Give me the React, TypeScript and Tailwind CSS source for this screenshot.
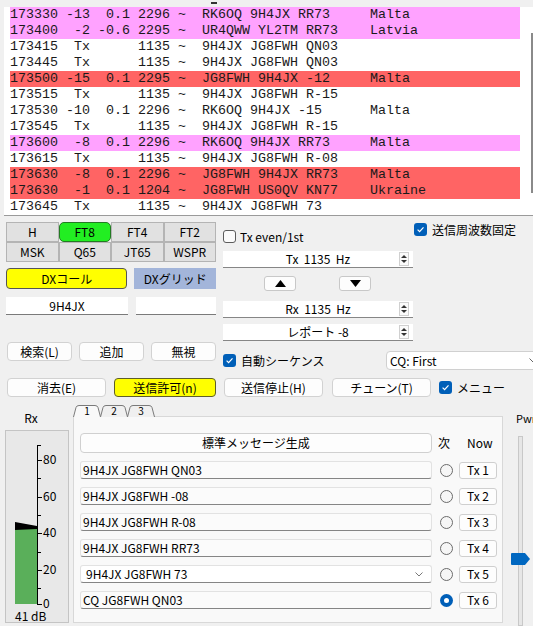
import React from "react";

const PINK = "bg-[#ffa2ff]";
const RED = "bg-[#ff6464]";

type Decode = {
  time: string;
  snr: string;
  dt: string;
  freq: string;
  msg: string;
  country?: string;
  bg?: string;
};

const decodes: Decode[] = [
  { time: "173330", snr: "-13", dt: "0.1", freq: "2296", msg: "RK6OQ 9H4JX RR73", country: "Malta", bg: PINK },
  { time: "173400", snr: "-2", dt: "-0.6", freq: "2295", msg: "UR4QWW YL2TM RR73", country: "Latvia", bg: PINK },
  { time: "173415", snr: "Tx", dt: "", freq: "1135", msg: "9H4JX JG8FWH QN03" },
  { time: "173445", snr: "Tx", dt: "", freq: "1135", msg: "9H4JX JG8FWH QN03" },
  { time: "173500", snr: "-15", dt: "0.1", freq: "2295", msg: "JG8FWH 9H4JX -12", country: "Malta", bg: RED },
  { time: "173515", snr: "Tx", dt: "", freq: "1135", msg: "9H4JX JG8FWH R-15" },
  { time: "173530", snr: "-10", dt: "0.1", freq: "2296", msg: "RK6OQ 9H4JX -15", country: "Malta" },
  { time: "173545", snr: "Tx", dt: "", freq: "1135", msg: "9H4JX JG8FWH R-15" },
  { time: "173600", snr: "-8", dt: "0.1", freq: "2296", msg: "RK6OQ 9H4JX RR73", country: "Malta", bg: PINK },
  { time: "173615", snr: "Tx", dt: "", freq: "1135", msg: "9H4JX JG8FWH R-08" },
  { time: "173630", snr: "-8", dt: "0.1", freq: "2296", msg: "JG8FWH 9H4JX RR73", country: "Malta", bg: RED },
  { time: "173630", snr: "-1", dt: "0.1", freq: "1204", msg: "JG8FWH US0QV KN77", country: "Ukraine", bg: RED },
  { time: "173645", snr: "Tx", dt: "", freq: "1135", msg: "9H4JX JG8FWH 73" },
];

const line = (d: Decode) =>
  `${d.time} ${d.snr.padStart(3)} ${d.dt.padStart(4)} ${d.freq} ~  ` +
  (d.country ? d.msg.padEnd(21) + d.country : d.msg);

const modes = ["H", "FT8", "FT4", "FT2", "MSK", "Q65", "JT65", "WSPR"];

const txMessages = [
  "9H4JX JG8FWH QN03",
  "9H4JX JG8FWH -08",
  "9H4JX JG8FWH R-08",
  "9H4JX JG8FWH RR73",
  "9H4JX JG8FWH 73",
  "CQ JG8FWH QN03",
];

function Check({ on }: { on?: boolean }) {
  return on ? (
    <span className="w-[13px] h-[13px] rounded-[3px] bg-[#005fb8] flex items-center justify-center shrink-0">
      <svg width="9" height="9" viewBox="0 0 9 9">
        <path d="M1.6 4.7 L3.6 6.7 L7.5 2.4" stroke="white" strokeWidth="1.2" fill="none" />
      </svg>
    </span>
  ) : (
    <span className="block w-[13px] h-[13px] rounded-[3px] border border-[#5c5c5c] bg-[#fbfbfb] shrink-0" />
  );
}

function Radio({ on }: { on?: boolean }) {
  return on ? (
    <span className="w-[13px] h-[13px] rounded-full bg-[#005fb8] flex items-center justify-center shrink-0">
      <span className="block w-[5px] h-[5px] rounded-full bg-white" />
    </span>
  ) : (
    <span className="block w-[13px] h-[13px] rounded-full border border-[#6b6b6b] bg-[#f6f6f6] shrink-0" />
  );
}

function Btn({ w, children, yellow }: { w: string; children: React.ReactNode; yellow?: boolean }) {
  return (
    <div
      className={`${w} h-[19px] rounded-[4px] border flex items-center justify-center text-[12px] ${
        yellow ? "bg-[#ffff00] border-[#5e5e2a]" : "bg-[#fdfdfd] border-[#d2d2d2]"
      }`}
    >
      {children}
    </div>
  );
}

function Spin({ label }: { label: string }) {
  return (
    <div className="relative w-[190px] h-[17px] bg-white border-b border-[#868686] flex items-center justify-center text-[12px]">
      <span className="whitespace-pre">{label}</span>
      <span className="absolute right-[4px] top-[1px] w-[10px] h-[14px] border border-[#d0d0d0] bg-[#fafafa] flex flex-col items-center justify-center gap-[2px]">
        <svg width="6" height="3">
          <path d="M0 3 L3 0 L6 3Z" fill="#333" />
        </svg>
        <svg width="6" height="3">
          <path d="M0 0 L3 3 L6 0Z" fill="#333" />
        </svg>
      </span>
    </div>
  );
}

function Meter() {
  const major = [
    { v: "80", y: 29 },
    { v: "60", y: 66 },
    { v: "40", y: 102 },
    { v: "20", y: 139 },
    { v: "0", y: 173 },
  ];
  const minor = [14, 47, 84, 121, 157];
  return (
    <svg width="62" height="191" className="block">
      <rect x="9" y="96" width="22" height="77" fill="#5aaf5a" />
      <polygon points="9,91 31,95 31,98 9,99" fill="#000" />
      <line x1="31.5" y1="14" x2="31.5" y2="173" stroke="#000" strokeWidth="1" />
      {minor.map((y) => (
        <line key={y} x1="31" y1={y + 0.5} x2="35" y2={y + 0.5} stroke="#000" strokeWidth="1" />
      ))}
      {major.map((m) => (
        <g key={m.v}>
          <line x1="31" y1={m.y + 0.5} x2="36" y2={m.y + 0.5} stroke="#000" strokeWidth="1" />
          <text x="37" y={m.y + 4} fontSize="12" fontFamily="Noto Sans CJK JP, sans-serif" fill="#000">
            {m.v}
          </text>
        </g>
      ))}
      <text x="9" y="190" fontSize="12" fontFamily="Noto Sans CJK JP, sans-serif" fill="#000">
        41 dB
      </text>
    </svg>
  );
}

function Tab({ n, active }: { n: string; active?: boolean }) {
  return (
    <div className="relative w-[28px] h-[12px] -mr-[1px] flex justify-center">
      <svg width="28" height="12" className="absolute inset-0">
        <path
          d="M0.5 12 L3 2.5 Q3.6 0.5 6 0.5 L22 0.5 Q24.4 0.5 25 2.5 L27.5 12"
          stroke="#7a7a7a"
          fill={active ? "#f9f9f9" : "#f0f0f0"}
        />
      </svg>
      <span className="relative text-[10px] leading-[12px]">{n}</span>
    </div>
  );
}

export default function App() {
  return (
    <div className="w-[533px] h-[626px] overflow-hidden bg-[#f0f0f0] text-black font-['Noto_Sans_CJK_JP',sans-serif] text-[12px]">
      {/* band activity */}
      <div className="relative h-[216px] pt-[7px] pl-[4px]">
        <div className="absolute left-[211px] top-[2px] w-[6px] h-[2px] bg-[#333]" />
        <div className="relative h-[209px] bg-white border-b border-[#9a9a9a] pl-[6px]">
          {decodes.map((d, i) => (
            <div
              key={i}
              className={`w-[510px] h-[16px] leading-[16px] whitespace-pre text-[13.33px] text-[#1a1a1a] font-['Liberation_Mono',monospace] ${
                d.bg ?? ""
              }`}
            >
              {line(d)}
            </div>
          ))}
          <div className="absolute right-0 top-[26px] w-[2px] h-[160px] bg-[#8a8a8a]" />
        </div>
      </div>

      {/* mode, DX and frequency controls */}
      <div className="flex h-[162px] pl-[6px]">
        <div className="w-[210px] shrink-0 pt-[6px]">
          <div className="grid grid-cols-4">
            {modes.map((m) =>
              m === "FT8" ? (
                <div
                  key={m}
                  className="h-[20px] rounded-[5px] border border-[#237a23] bg-[#22ee22] flex items-center justify-center text-[12px]"
                >
                  {m}
                </div>
              ) : (
                <div
                  key={m}
                  className="h-[20px] border border-[#b4b4b4] bg-[#e1e1e1] flex items-center justify-center text-[12px]"
                >
                  {m}
                </div>
              )
            )}
          </div>
          <div className="flex gap-[7px] mt-[6px]">
            <div className="w-[122px] h-[21px] rounded-[4px] border border-[#555] bg-[#ffff00] flex items-center justify-center">
              DXコール
            </div>
            <div className="w-[82px] h-[21px] bg-[#a3b5da] flex items-center justify-center">DXグリッド</div>
          </div>
          <div className="flex gap-[8px] mt-[8px]">
            <div className="w-[122px] h-[18px] bg-white border-b border-[#7a7a7a] flex items-center justify-center">
              9H4JX
            </div>
            <div className="w-[80px] h-[18px] bg-white border-b border-[#7a7a7a]" />
          </div>
          <div className="flex gap-[7px] mt-[27px] pl-[1px]">
            <Btn w="w-[65px]">検索(L)</Btn>
            <Btn w="w-[65px]">追加</Btn>
            <Btn w="w-[65px]">無視</Btn>
          </div>
        </div>

        <div className="ml-[7px] w-[310px] shrink-0">
          <div className="flex h-[35px]">
            <div className="w-[191px] shrink-0 pt-[14px] flex items-start gap-[4px]">
              <Check />
              <span className="leading-[13px]">Tx even/1st</span>
            </div>
            <div className="pt-[7px] flex items-start gap-[5px] shrink-0">
              <Check on />
              <span className="leading-[13px]">送信周波数固定</span>
            </div>
          </div>
          <Spin label="Tx  1135  Hz" />
          <div className="flex gap-[43px] pl-[41px] mt-[8px]">
            <div className="w-[32px] h-[15px] rounded-[3px] border border-[#c8c8c8] bg-[#fdfdfd] flex items-center justify-center">
              <svg width="11" height="7">
                <path d="M0 7 L5.5 0 L11 7Z" fill="#000" />
              </svg>
            </div>
            <div className="w-[32px] h-[15px] rounded-[3px] border border-[#c8c8c8] bg-[#fdfdfd] flex items-center justify-center">
              <svg width="11" height="7">
                <path d="M0 0 L5.5 7 L11 0Z" fill="#000" />
              </svg>
            </div>
          </div>
          <div className="mt-[10px]">
            <Spin label="Rx  1135  Hz" />
          </div>
          <div className="mt-[6px]">
            <Spin label="レポート -8" />
          </div>
          <div className="flex items-center mt-[10px] h-[19px]">
            <div className="w-[163px] shrink-0 flex items-center gap-[5px]">
              <Check on />
              <span>自動シーケンス</span>
            </div>
            <div className="w-[160px] h-[19px] shrink-0 rounded-[4px] border border-[#d0d0d0] bg-white flex items-center pl-[3px] pr-[8px] justify-between">
              <span>CQ: First</span>
              <svg width="8" height="5">
                <path d="M0.5 0.5 L4 4 L7.5 0.5" stroke="#666" fill="none" />
              </svg>
            </div>
          </div>
        </div>
      </div>

      {/* transmit controls */}
      <div className="flex items-center h-[19px] pl-[7px]">
        <Btn w="w-[99px]">消去(E)</Btn>
        <div className="ml-[8px]">
          <Btn w="w-[102px]" yellow>
            送信許可(n)
          </Btn>
        </div>
        <div className="ml-[8px]">
          <Btn w="w-[99px]">送信停止(H)</Btn>
        </div>
        <div className="ml-[9px]">
          <Btn w="w-[99px]">チューン(T)</Btn>
        </div>
        <div className="ml-[8px] flex items-center gap-[5px]">
          <Check on />
          <span>メニュー</span>
        </div>
      </div>

      {/* meter, messages, power */}
      <div className="flex mt-[8px]">
        <div className="w-[73px] shrink-0 pl-[5px]">
          <div className="w-[52px] h-[25px] pt-[6px] text-center leading-[14px]">Rx</div>
          <div className="w-[64px] h-[193px] border border-[#c4c4c4] bg-[#e8e8e8]">
            <Meter />
          </div>
        </div>

        <div className="w-[430px] shrink-0">
          <div className="flex h-[12px] relative z-10">
            <Tab n="1" active />
            <Tab n="2" />
            <Tab n="3" />
          </div>
          <div className="h-[207px] -mt-[1px] border border-[#d8d8d8] bg-[#f9f9f9] pl-[6px] pt-[16px]">
            <div className="flex items-center">
              <div className="w-[352px] h-[20px] rounded-[4px] border border-[#d0d0d0] bg-[#fdfdfd] flex items-center justify-center">
                標準メッセージ生成
              </div>
              <span className="ml-[6px]">次</span>
              <span className="ml-[17px]">Now</span>
            </div>
            <div className="flex flex-col gap-[8px] mt-[8px]">
              {txMessages.map((m, i) => (
                <div key={i} className="flex items-center">
                  <div
                    className={`w-[352px] h-[18px] shrink-0 rounded-[3px] border border-[#e2e2e2] border-b-[#858585] flex items-center justify-between pr-[8px] ${
                      i === 4 ? "bg-white pl-[5px]" : "bg-[#fbfbfb] pl-[2px]"
                    }`}
                  >
                    <span>{m}</span>
                    {i === 4 && (
                      <svg width="8" height="5">
                        <path d="M0.5 0.5 L4 4 L7.5 0.5" stroke="#777" fill="none" />
                      </svg>
                    )}
                  </div>
                  <div className="ml-[8px]">
                    <Radio on={i === 5} />
                  </div>
                  <div className="ml-[6px] w-[38px] h-[17px] shrink-0 rounded-[3px] border border-[#cfcfcf] bg-[#fdfdfd] flex items-center justify-center whitespace-pre">
                    {`Tx ${i + 1}`}
                  </div>
                </div>
              ))}
            </div>
          </div>
        </div>

        <div className="relative flex-1 flex flex-col h-[221px]">
          <div className="pl-[13px] pt-[7px] h-[31px] leading-[12px] text-[11px] whitespace-nowrap">Pwr</div>
          <div className="ml-[15px] w-[5px] flex-1 border border-[#c8c8c8] bg-[#e6e6e6]" />
          <svg width="20" height="12" className="absolute left-[8px] top-[148px]">
            <path d="M0 1 Q0 0 1 0 L14 0 L19 6 L14 12 L1 12 Q0 12 0 11Z" fill="#0067c0" />
          </svg>
        </div>
      </div>
    </div>
  );
}
